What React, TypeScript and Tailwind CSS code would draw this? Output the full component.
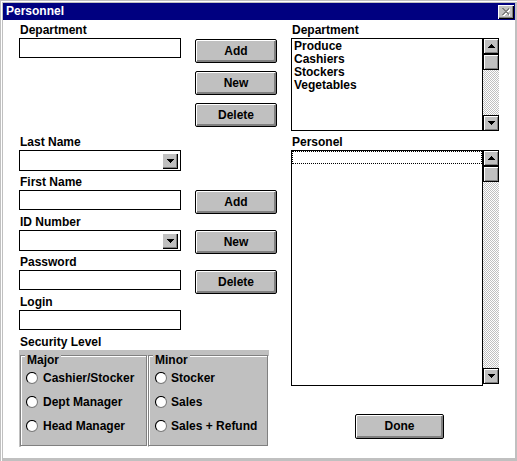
import React from "react";

const font = "font-['Liberation_Sans',Arial,sans-serif] font-bold text-[12px] text-black";

function Label({ children }: { children: React.ReactNode }) {
  return <div className="h-[15px] leading-[14px] pl-[1px]">{children}</div>;
}

function TextBox() {
  return <div className="h-[20px] border border-black bg-white" />;
}

function Arrow({ dir }: { dir: "up" | "down" }) {
  return (
    <svg width="7" height="4" shapeRendering="crispEdges">
      {dir === "up" ? (
        <path d="M3 0h1v1h1v1h1v1h1v1H0V3h1V2h1V1h1z" fill="#000" />
      ) : (
        <path d="M0 0h7v1H6v1H5v1H4v1H3V3H2V2H1V1H0z" fill="#000" />
      )}
    </svg>
  );
}

function Combo() {
  return (
    <div className="h-[21px] border border-black bg-white flex justify-end pt-[2px] pr-[2px]">
      <div className="w-[16px] h-[16px] bg-[#c0c0c0] flex items-center justify-center shadow-[inset_1px_1px_0_#fff,inset_-1px_-1px_0_#000,inset_-2px_-2px_0_#808080]">
        <Arrow dir="down" />
      </div>
    </div>
  );
}

function Button({ label, className }: { label: string; className?: string }) {
  return (
    <div
      className={`flex items-center justify-center pb-[1px] bg-[#c0c0c0] border border-black rounded-[2px] shadow-[inset_1px_1px_0_#fff,inset_-2px_-2px_0_#808080] ${className ?? ""}`}
    >
      {label}
    </div>
  );
}

function ScrollBtn({ dir }: { dir: "up" | "down" }) {
  return (
    <div className="h-[16px] shrink-0 bg-[#c0c0c0] border border-black flex items-center justify-center shadow-[inset_1px_1px_0_#fff,inset_-1px_-1px_0_#808080]">
      {dir === "up" ? <Arrow dir="up" /> : <Arrow dir="down" />}
    </div>
  );
}

function ScrollBar({ height }: { height: string }) {
  return (
    <div className={`w-[16px] flex flex-col ${height}`}>
      <ScrollBtn dir="up" />
      <div className="h-[16px] shrink-0 bg-[#c0c0c0] border border-black shadow-[inset_1px_1px_0_#fff,inset_-1px_-1px_0_#808080]" />
      <div className="flex-1 bg-[image:repeating-conic-gradient(#c0c0c0_0_25%,#ffffff_0_50%)] bg-[length:2px_2px]" />
      <ScrollBtn dir="down" />
    </div>
  );
}

function Radio({ label, gap }: { label: string; gap: string }) {
  return (
    <div className={`h-[24px] flex items-center ${gap}`}>
      <svg width="12" height="12" className="shrink-0">
        <circle cx="6" cy="6" r="5.5" fill="#fff" />
        <path d="M2.11 9.89A5.5 5.5 0 0 1 9.89 2.11" fill="none" stroke="#000" strokeWidth="1.1" />
        <path d="M9.89 2.11A5.5 5.5 0 0 1 2.11 9.89" fill="none" stroke="#808080" strokeWidth="1.1" />
      </svg>
      <span className="leading-[14px]">{label}</span>
    </div>
  );
}

function GroupBox({
  title,
  items,
  className,
  pad,
  gap,
}: {
  title: string;
  items: string[];
  className: string;
  pad: string;
  gap: string;
}) {
  return (
    <div
      className={`relative h-[91px] border border-[#808080] shadow-[inset_1px_1px_0_#fff,1px_1px_0_#fff] flex flex-col pt-[10px] ${pad} ${className}`}
    >
      <div className="absolute top-[-3px] left-[4px] px-[2px] leading-[14px] bg-[#c0c0c0]">{title}</div>
      {items.map((it) => (
        <Radio key={it} label={it} gap={gap} />
      ))}
    </div>
  );
}

export default function App() {
  return (
    <div className={`w-[517px] h-[461px] ${font}`}>
      <div className="w-full h-full border-t border-l border-[#c0c0c0] border-r-black border-b-black">
        <div className="w-full h-full border-t border-l border-white border-r-[#808080] border-b-[#808080] bg-[#c0c0c0] pt-[1px] pl-[1px] pr-[2px] pb-[3px] flex flex-col">
          {/* title bar */}
          <div className="h-[17px] shrink-0 bg-[#000080] flex items-center justify-between pl-[3px] pr-[1px]">
            <span className="text-white leading-[17px]">Personnel</span>
            <div className="w-[16px] h-[14px] bg-[#c0c0c0] flex items-center justify-center shadow-[inset_1px_1px_0_#fff,inset_-1px_-1px_0_#000,inset_-2px_-2px_0_#808080]">
              <svg width="9" height="8" shapeRendering="crispEdges">
                <path d="M1.5 1.5l7 6M8.5 1.5l-7 6" stroke="#fff" strokeWidth="1.4" />
                <path d="M0.5 0.5l7 6M7.5 0.5l-7 6" stroke="#808080" strokeWidth="1.4" />
              </svg>
            </div>
          </div>

          {/* body */}
          <div className="flex-1 bg-white flex pt-[3px] pl-[16px]">
            {/* left column */}
            <div className="w-[162px] flex flex-col">
              <Label>Department</Label>
              <TextBox />
              <div className="mt-[77px] h-[40px]">
                <Label>Last Name</Label>
                <Combo />
              </div>
              <div className="h-[40px]">
                <Label>First Name</Label>
                <TextBox />
              </div>
              <div className="h-[40px]">
                <Label>ID Number</Label>
                <Combo />
              </div>
              <div className="h-[40px]">
                <Label>Password</Label>
                <TextBox />
              </div>
              <div className="h-[40px]">
                <Label>Login</Label>
                <TextBox />
              </div>
              <Label>Security Level</Label>
              <div className="bg-[#c0c0c0] w-[250px] h-[97px] pt-[5px] pl-[1px] flex">
                <GroupBox
                  title="Major"
                  items={["Cashier/Stocker", "Dept Manager", "Head Manager"]}
                  className="w-[127px]"
                  pad="pl-[5px]"
                  gap="gap-[5px]"
                />
                <GroupBox
                  title="Minor"
                  items={["Stocker", "Sales", "Sales + Refund"]}
                  className="w-[120px] ml-[1px]"
                  pad="pl-[6px]"
                  gap="gap-[4px]"
                />
              </div>
            </div>

            {/* button column */}
            <div className="ml-[14px] w-[82px] flex flex-col pt-[16px]">
              <Button label="Add" className="h-[24px]" />
              <Button label="New" className="h-[24px] mt-[8px]" />
              <Button label="Delete" className="h-[24px] mt-[8px]" />
              <Button label="Add" className="h-[24px] mt-[63px]" />
              <Button label="New" className="h-[24px] mt-[16px]" />
              <Button label="Delete" className="h-[24px] mt-[16px]" />
            </div>

            {/* right column */}
            <div className="ml-[14px] w-[209px] flex flex-col">
              <Label>Department</Label>
              <div className="flex h-[93px]">
                <div className="w-[192px] h-full border border-black bg-white pl-[2px] pt-[1px] leading-[13px]">
                  <div>Produce</div>
                  <div>Cashiers</div>
                  <div>Stockers</div>
                  <div>Vegetables</div>
                </div>
                <ScrollBar height="h-[93px]" />
              </div>
              <div className="mt-[4px]">
                <Label>Personel</Label>
              </div>
              <div className="flex h-[236px]">
                <div className="w-[192px] h-full border border-black bg-white">
                  <div className="h-[13px] border border-dotted border-black" />
                </div>
                <ScrollBar height="h-[234px]" />
              </div>
              <Button label="Done" className="ml-[64px] mt-[28px] w-[89px] h-[25px]" />
            </div>
          </div>
        </div>
      </div>
    </div>
  );
}
